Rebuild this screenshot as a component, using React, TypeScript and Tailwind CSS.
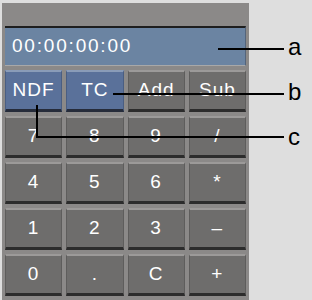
import React from "react";

const keys = [
  { label: "NDF", blue: true },
  { label: "TC", blue: true },
  { label: "Add" },
  { label: "Sub" },
  { label: "7" },
  { label: "8" },
  { label: "9" },
  { label: "/" },
  { label: "4" },
  { label: "5" },
  { label: "6" },
  { label: "*" },
  { label: "1" },
  { label: "2" },
  { label: "3" },
  { label: "–" },
  { label: "0" },
  { label: "." },
  { label: "C" },
  { label: "+" },
];

function Key({ label, blue }: { label: string; blue?: boolean }) {
  return (
    <div
      className={
        "flex h-[42px] items-center justify-center border-x border-t-2 border-b-[3px] text-[19px] tracking-[1px] text-white " +
        (blue
          ? "border-t-[#8a9cb8] border-x-[#4a5e82] border-b-[#262c3a] bg-[#5a719a]"
          : "border-t-[#9c9a99] border-x-[#5e5d5c] border-b-[#2c2c2c] bg-[#6e6d6c]")
      }
    >
      {label}
    </div>
  );
}

export default function App() {
  return (
    <div
      className="relative h-[300px] w-[312px] overflow-hidden bg-[#dedede]"
      style={{ fontFamily: '"Liberation Sans", Arial, sans-serif' }}
    >
      <div className="ml-[2px] mt-[3px] h-[297px] w-[247px] bg-[#8b8988] px-[3px] pt-[23px]">
        <div className="flex h-[40px] items-center border-t-2 border-b border-r border-t-[#1e1e1e] border-b-[#a8a8a8] border-r-[#54647a] bg-[#6b84a2] pl-[7px] text-[19px] tracking-[1.8px] text-white">
          00:00:00:00
        </div>
        <div className="mt-[4px] grid grid-cols-4 gap-[4px]">
          {keys.map((k) => (
            <Key key={k.label} label={k.label} blue={k.blue} />
          ))}
        </div>
      </div>

      {/* callouts */}
      <div className="absolute left-[218px] top-[48px] h-[2px] w-[66px] bg-black" />
      <div className="absolute left-[113px] top-[93px] h-[2px] w-[171px] bg-black" />
      <div className="absolute left-[36px] top-[105px] h-[33px] w-[2px] bg-black" />
      <div className="absolute left-[36px] top-[136px] h-[2px] w-[248px] bg-black" />
      <div className="absolute left-[288px] top-[35px] text-[24px] leading-none text-black">a</div>
      <div className="absolute left-[288px] top-[80px] text-[24px] leading-none text-black">b</div>
      <div className="absolute left-[288px] top-[125px] text-[24px] leading-none text-black">c</div>
    </div>
  );
}
